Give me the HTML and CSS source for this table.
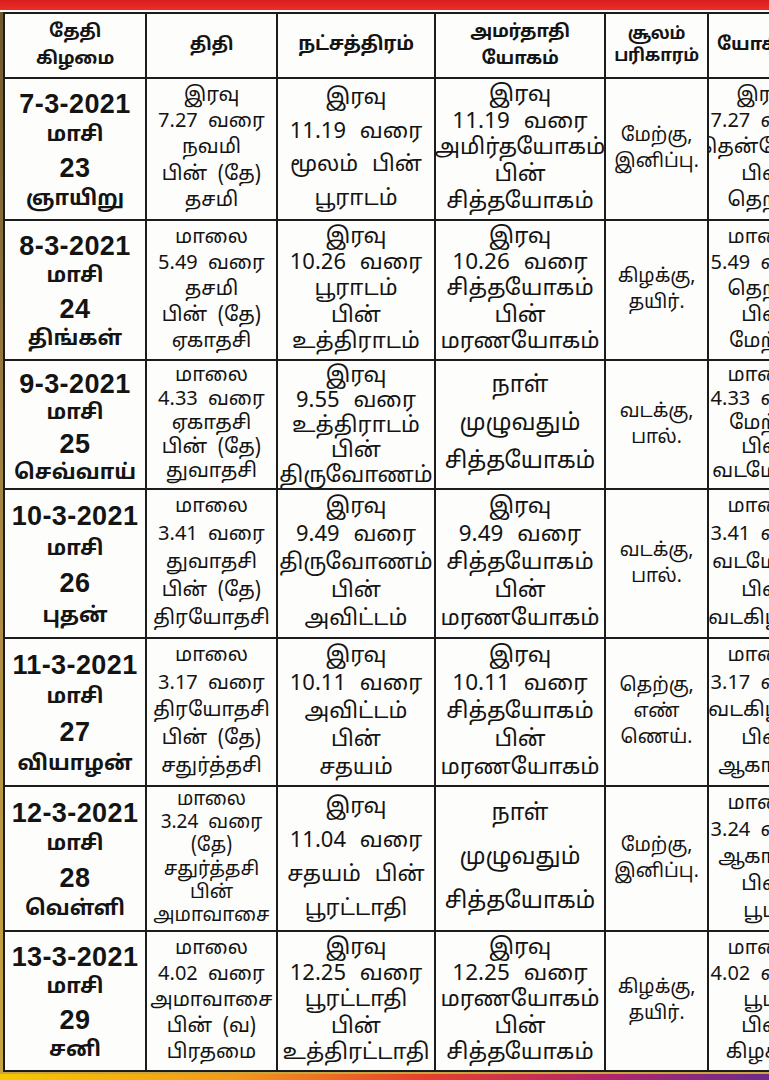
FILE: index.html
```html
<!DOCTYPE html>
<html lang="ta">
<head>
<meta charset="utf-8">
<title>மாசி பஞ்சாங்கம்</title>
<link rel="stylesheet" href="styles.css">
</head>
<body>
<div class="page">
  <div class="topbar"></div>
  <div class="frame">
    <div class="cal">
      <div class="cell head"><span>தேதி</span><span>கிழமை</span></div>
      <div class="cell head"><span>திதி</span></div>
      <div class="cell head wide"><span>நட்சத்திரம்</span></div>
      <div class="cell head"><span>அமர்தாதி</span><span>யோகம்</span></div>
      <div class="cell head small"><span>சூலம்</span><span>பரிகாரம்</span></div>
      <div class="cell head left"><span>யோகினி</span></div>

      <div class="cell date"><span class="num">7-3-2021</span><span>மாசி</span><span class="num">23</span><span>ஞாயிறு</span></div>
      <div class="cell tithi"><span>இரவு</span><span>7.27 வரை</span><span>நவமி</span><span>பின் (தே)</span><span>தசமி</span></div>
      <div class="cell star"><span>இரவு</span><span>11.19 வரை</span><span>மூலம் பின்</span><span>பூராடம்</span></div>
      <div class="cell yoga"><span>இரவு</span><span>11.19 வரை</span><span>அமிர்தயோகம்</span><span>பின்</span><span>சித்தயோகம்</span></div>
      <div class="cell soolam"><span>மேற்கு,</span><span>இனிப்பு.</span></div>
      <div class="cell yogini"><span>இரவு</span><span>7.27 வரை</span><span>தென்மேற்கு</span><span>பின்</span><span>தெற்கு</span></div>

      <div class="cell date"><span class="num">8-3-2021</span><span>மாசி</span><span class="num">24</span><span>திங்கள்</span></div>
      <div class="cell tithi"><span>மாலை</span><span>5.49 வரை</span><span>தசமி</span><span>பின் (தே)</span><span>ஏகாதசி</span></div>
      <div class="cell star"><span>இரவு</span><span>10.26 வரை</span><span>பூராடம்</span><span>பின்</span><span>உத்திராடம்</span></div>
      <div class="cell yoga"><span>இரவு</span><span>10.26 வரை</span><span>சித்தயோகம்</span><span>பின்</span><span>மரணயோகம்</span></div>
      <div class="cell soolam"><span>கிழக்கு,</span><span>தயிர்.</span></div>
      <div class="cell yogini"><span>மாலை</span><span>5.49 வரை</span><span>தெற்கு</span><span>பின்</span><span>மேற்கு</span></div>

      <div class="cell date"><span class="num">9-3-2021</span><span>மாசி</span><span class="num">25</span><span>செவ்வாய்</span></div>
      <div class="cell tithi"><span>மாலை</span><span>4.33 வரை</span><span>ஏகாதசி</span><span>பின் (தே)</span><span>துவாதசி</span></div>
      <div class="cell star"><span>இரவு</span><span>9.55 வரை</span><span>உத்திராடம்</span><span>பின்</span><span>திருவோணம்</span></div>
      <div class="cell yoga spread"><span>நாள்</span><span>முழுவதும்</span><span>சித்தயோகம்</span></div>
      <div class="cell soolam"><span>வடக்கு,</span><span>பால்.</span></div>
      <div class="cell yogini"><span>மாலை</span><span>4.33 வரை</span><span>மேற்கு</span><span>பின்</span><span>வடமேற்கு</span></div>

      <div class="cell date"><span class="num">10-3-2021</span><span>மாசி</span><span class="num">26</span><span>புதன்</span></div>
      <div class="cell tithi"><span>மாலை</span><span>3.41 வரை</span><span>துவாதசி</span><span>பின் (தே)</span><span>திரயோதசி</span></div>
      <div class="cell star"><span>இரவு</span><span>9.49 வரை</span><span>திருவோணம்</span><span>பின்</span><span>அவிட்டம்</span></div>
      <div class="cell yoga"><span>இரவு</span><span>9.49 வரை</span><span>சித்தயோகம்</span><span>பின்</span><span>மரணயோகம்</span></div>
      <div class="cell soolam"><span>வடக்கு,</span><span>பால்.</span></div>
      <div class="cell yogini"><span>மாலை</span><span>3.41 வரை</span><span>வடமேற்கு</span><span>பின்</span><span>வடகிழக்கு</span></div>

      <div class="cell date"><span class="num">11-3-2021</span><span>மாசி</span><span class="num">27</span><span>வியாழன்</span></div>
      <div class="cell tithi"><span>மாலை</span><span>3.17 வரை</span><span>திரயோதசி</span><span>பின் (தே)</span><span>சதுர்த்தசி</span></div>
      <div class="cell star"><span>இரவு</span><span>10.11 வரை</span><span>அவிட்டம்</span><span>பின்</span><span>சதயம்</span></div>
      <div class="cell yoga"><span>இரவு</span><span>10.11 வரை</span><span>சித்தயோகம்</span><span>பின்</span><span>மரணயோகம்</span></div>
      <div class="cell soolam"><span>தெற்கு,</span><span>எண்</span><span>ணெய்.</span></div>
      <div class="cell yogini"><span>மாலை</span><span>3.17 வரை</span><span>வடகிழக்கு</span><span>பின்</span><span>ஆகாயம்</span></div>

      <div class="cell date"><span class="num">12-3-2021</span><span>மாசி</span><span class="num">28</span><span>வெள்ளி</span></div>
      <div class="cell tithi dense"><span>மாலை</span><span>3.24 வரை</span><span>(தே)</span><span>சதுர்த்தசி</span><span>பின்</span><span>அமாவாசை</span></div>
      <div class="cell star"><span>இரவு</span><span>11.04 வரை</span><span>சதயம் பின்</span><span>பூரட்டாதி</span></div>
      <div class="cell yoga spread"><span>நாள்</span><span>முழுவதும்</span><span>சித்தயோகம்</span></div>
      <div class="cell soolam"><span>மேற்கு,</span><span>இனிப்பு.</span></div>
      <div class="cell yogini"><span>மாலை</span><span>3.24 வரை</span><span>ஆகாயம்</span><span>பின்</span><span>பூமி</span></div>

      <div class="cell date"><span class="num">13-3-2021</span><span>மாசி</span><span class="num">29</span><span>சனி</span></div>
      <div class="cell tithi"><span>மாலை</span><span>4.02 வரை</span><span>அமாவாசை</span><span>பின் (வ)</span><span>பிரதமை</span></div>
      <div class="cell star"><span>இரவு</span><span>12.25 வரை</span><span>பூரட்டாதி</span><span>பின்</span><span>உத்திரட்டாதி</span></div>
      <div class="cell yoga"><span>இரவு</span><span>12.25 வரை</span><span>மரணயோகம்</span><span>பின்</span><span>சித்தயோகம்</span></div>
      <div class="cell soolam"><span>கிழக்கு,</span><span>தயிர்.</span></div>
      <div class="cell yogini"><span>மாலை</span><span>4.02 வரை</span><span>பூமி</span><span>பின்</span><span>கிழக்கு</span></div>
    </div>
  </div>
  <div class="bottombar"></div>
</div>
</body>
</html>
```

FILE: styles.css
```css
* { box-sizing: border-box; }
html, body {
  margin: 0;
  padding: 0;
  background: #ffffff;
}
body {
  width: 769px;
  height: 1080px;
  overflow: hidden;
  font-family: "Noto Sans Tamil", "Lohit Tamil", "Noto Sans", "Liberation Sans", sans-serif;
  color: #141414;
}
.page {
  width: 769px;
  height: 1080px;
  display: flex;
  flex-direction: column;
  overflow: hidden;
  background: #fdfdfb;
}
.topbar {
  height: 10px;
  flex: none;
  background: linear-gradient(180deg, #d61f1e 0%, #ef2c27 100%);
}
.frame {
  flex: none;
  height: 1062px;
  margin-top: 2px;
  overflow: hidden;
  background: linear-gradient(180deg, #6f5a2e, #a88a45 50%, #c9a640);
  padding-left: 3px;
}
.cal {
  display: grid;
  grid-template-columns: 140px 129px 156px 168px 101px 110px;
  grid-template-rows: 63px 140px 138px 127px 147px 146px 143px 138px;
  gap: 2px;
  padding: 2px;
  width: 818px;
  background: #1c1c1c;
}
.cell {
  background: #fdfdfb;
  display: flex;
  flex-direction: column;
  align-items: center;
  justify-content: space-around;
  white-space: nowrap;
  overflow: hidden;
}
.cell span { display: block; }

.head {
  justify-content: center;
  font-weight: 700;
  font-size: 18px;
  line-height: 27px;
  letter-spacing: -0.3px;
}
.head.wide { font-size: 19px; }
.head.small { font-size: 17px; line-height: 22px; }
.head.left { align-items: flex-start; padding-left: 8px; }

.date {
  font-weight: 700;
  font-size: 21px;
  line-height: 30px;
  justify-content: space-evenly;
  padding: 8px 0 2px;
}
.date .num {
  font-family: "Liberation Sans", Arial, sans-serif;
  font-size: 27px;
  letter-spacing: 0.4px;
}

.tithi {
  font-size: 20px;
  line-height: 23px;
  word-spacing: 5px;
  padding: 4px 0;
}
.tithi.dense { line-height: 21px; font-size: 19px; padding: 2px 0; }

.star, .yoga {
  font-size: 22px;
  line-height: 25px;
  word-spacing: 8px;
  padding: 3px 0;
}
.yoga { font-size: 22.5px; }
.yoga.spread { padding: 6px 0; font-size: 23px; }

.soolam {
  justify-content: center;
  font-size: 19px;
  line-height: 26px;
}

.yogini {
  font-size: 20px;
  line-height: 23px;
  word-spacing: 5px;
  padding: 4px 0;
}

.bottombar {
  flex: 1;
  background: linear-gradient(90deg, #f6c800 0%, #f39a1a 30%, #e8402c 55%, #b3266a 78%, #6b2b8e 100%);
}
```
